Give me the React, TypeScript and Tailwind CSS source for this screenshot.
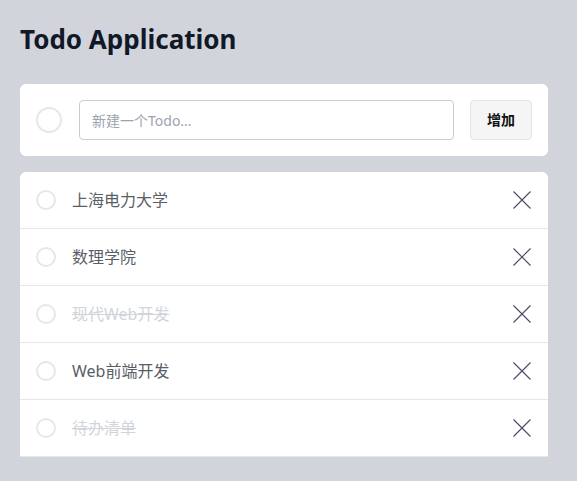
import React, { useState } from "react";

type Todo = { id: number; text: string; done: boolean };

const initialTodos: Todo[] = [
  { id: 1, text: "上海电力大学", done: false },
  { id: 2, text: "数理学院", done: false },
  { id: 3, text: "现代Web开发", done: true },
  { id: 4, text: "Web前端开发", done: false },
  { id: 5, text: "待办清单", done: true },
];

const CloseIcon: React.FC = () => (
  <svg width="18" height="18" viewBox="0 0 18 18" fill="none">
    <path d="M0.5 0.5 L17.5 17.5 M17.5 0.5 L0.5 17.5" stroke="#4a4a68" strokeWidth="1.1" />
  </svg>
);

const App: React.FC = () => {
  const [todos, setTodos] = useState<Todo[]>(initialTodos);
  const [text, setText] = useState("");

  const addTodo = () => {
    if (!text.trim()) return;
    setTodos([...todos, { id: Date.now(), text: text.trim(), done: false }]);
    setText("");
  };

  const toggle = (id: number) =>
    setTodos(todos.map((t) => (t.id === id ? { ...t, done: !t.done } : t)));

  const remove = (id: number) => setTodos(todos.filter((t) => t.id !== id));

  return (
    <div className="min-h-screen bg-[#d1d5db] px-5 pt-[22px] font-['Noto_Sans','Noto_Sans_CJK_SC',sans-serif]">
      <h1 className="text-[26px] font-bold leading-[34px] text-[#111827]">Todo Application</h1>

      {/* Input card */}
      <div className="mt-7 flex h-[72px] w-[528px] items-center rounded-md bg-white pl-4 pr-4">
        <div className="h-[26px] w-[26px] shrink-0 rounded-full border-2 border-[#e5e7eb]" />
        <input
          value={text}
          onChange={(e) => setText(e.target.value)}
          placeholder="新建一个Todo..."
          className="ml-[17px] h-10 w-[375px] rounded border border-[#cccccc] px-3 text-sm text-[#374151] placeholder:text-[#9ca3af] focus:outline-none"
        />
        <button
          onClick={addTodo}
          className="ml-4 h-10 w-[62px] rounded border border-[#e5e5e5] bg-[#f5f5f5] text-sm font-bold text-[#111]"
        >
          增加
        </button>
      </div>

      {/* Todo list */}
      <div className="mt-4 w-[528px] overflow-hidden rounded-t-md bg-white">
        {todos.map((todo) => (
          <div
            key={todo.id}
            className="flex h-[57px] items-center border-b border-[#e5e7eb] pl-4 pr-4"
          >
            <button
              onClick={() => toggle(todo.id)}
              className="h-5 w-5 shrink-0 rounded-full border-2 border-[#e5e7eb]"
            />
            <span
              className={`ml-4 flex-1 text-base ${
                todo.done ? "text-[#d1d5db] line-through" : "text-[#5a5e66]"
              }`}
            >
              {todo.text}
            </span>
            <button onClick={() => remove(todo.id)} className="mr-px">
              <CloseIcon />
            </button>
          </div>
        ))}
      </div>
    </div>
  );
};

export default App;
